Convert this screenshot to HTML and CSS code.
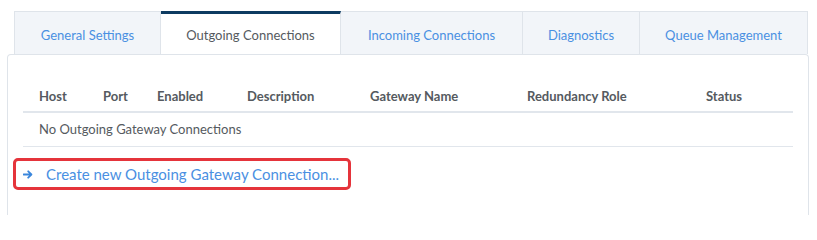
FILE: index.html
```html
<!DOCTYPE html>
<html lang="en">
<head>
<meta charset="utf-8">
<title>Gateway Network Settings</title>
<link rel="stylesheet" href="styles.css">
</head>
<body>
<div class="page">
  <ul class="tabs">
    <li class="tab"><a href="#">General Settings</a></li>
    <li class="tab active"><a href="#">Outgoing Connections</a></li>
    <li class="tab"><a href="#">Incoming Connections</a></li>
    <li class="tab"><a href="#">Diagnostics</a></li>
    <li class="tab"><a href="#">Queue Management</a></li>
  </ul>
  <div class="panel">
    <table class="grid">
      <colgroup>
        <col class="c-host"><col class="c-port"><col class="c-enabled"><col class="c-desc"><col class="c-name"><col class="c-role"><col class="c-status">
      </colgroup>
      <thead>
        <tr><th>Host</th><th>Port</th><th>Enabled</th><th>Description</th><th>Gateway Name</th><th>Redundancy Role</th><th>Status</th></tr>
      </thead>
      <tbody>
        <tr><td colspan="7">No Outgoing Gateway Connections</td></tr>
      </tbody>
    </table>
    <a class="create" href="#"><svg class="arrow" width="10" height="9" viewBox="0 0 10 9" aria-hidden="true"><path d="M0.5 4.5H8.2M5.2 1.3L8.4 4.5L5.2 7.7" fill="none" stroke="#3a86dc" stroke-width="1.8" stroke-linecap="round" stroke-linejoin="round"/></svg>Create new Outgoing Gateway Connection...</a>
  </div>
</div>
</body>
</html>
```
FILE: styles.css
```css
html, body {
  margin: 0;
  padding: 0;
  background: #ffffff;
}
body {
  font-family: "Lato", "Liberation Sans", sans-serif;
  font-size: 13px;
  color: #555a60;
}
.page {
  padding: 11px 8px 0 7px;
}
.tabs {
  list-style: none;
  margin: 0 1px 0 7px;
  padding: 0;
  display: flex;
  height: 43px;
}
.tab {
  background: #f2f5f9;
  border: 1px solid #dfe4ea;
  border-bottom: none;
  border-left: none;
  display: flex;
}
.tab:first-child {
  border-left: 1px solid #dfe4ea;
}
.tab a {
  display: flex;
  align-items: center;
  justify-content: center;
  padding: 4px 0 0;
  color: #4a90e2;
  text-decoration: none;
  line-height: 20px;
  white-space: nowrap;
}
.tab.active {
  background: #ffffff;
  border-top: 3px solid #0d3b61;
}
.tab.active a {
  color: #555a60;
  padding-top: 1px;
}
.tab:nth-child(1) a { width: 145px; }
.tab:nth-child(2) a { width: 179px; }
.tab:nth-child(3) a { width: 181px; }
.tab:nth-child(4) a { width: 116px; }
.tab:nth-child(5) a { width: 167px; }
.panel {
  box-sizing: border-box;
  border: 1px solid #dfe4ea;
  border-bottom: none;
  border-radius: 4px 4px 0 0;
  padding: 22px 15px 0;
  height: 161px;
}
.grid {
  width: 100%;
  border-collapse: collapse;
  table-layout: fixed;
}
.c-host { width: 64px; }
.c-port { width: 54px; }
.c-enabled { width: 90px; }
.c-desc { width: 123px; }
.c-name { width: 157px; }
.c-role { width: 179px; }
.c-status { width: auto; }
.grid th {
  text-align: left;
  font-weight: 700;
  color: #555a60;
  padding: 10px 16px 6px;
  line-height: 18px;
  border-bottom: 2px solid #e1e6ec;
  white-space: nowrap;
}
.grid td {
  padding: 8px 16px;
  line-height: 17px;
  border-bottom: 1px solid #e1e6ec;
}
.create {
  margin-top: 11px;
  margin-left: -10px;
  display: inline-flex;
  align-items: center;
  height: 26px;
  padding: 0 9px 0 7px;
  border: 3px solid #e5343b;
  border-radius: 5px;
  color: #4a90e2;
  text-decoration: none;
  font-size: 15px;
}
.arrow {
  margin-right: 13px;
  flex: none;
}
```
